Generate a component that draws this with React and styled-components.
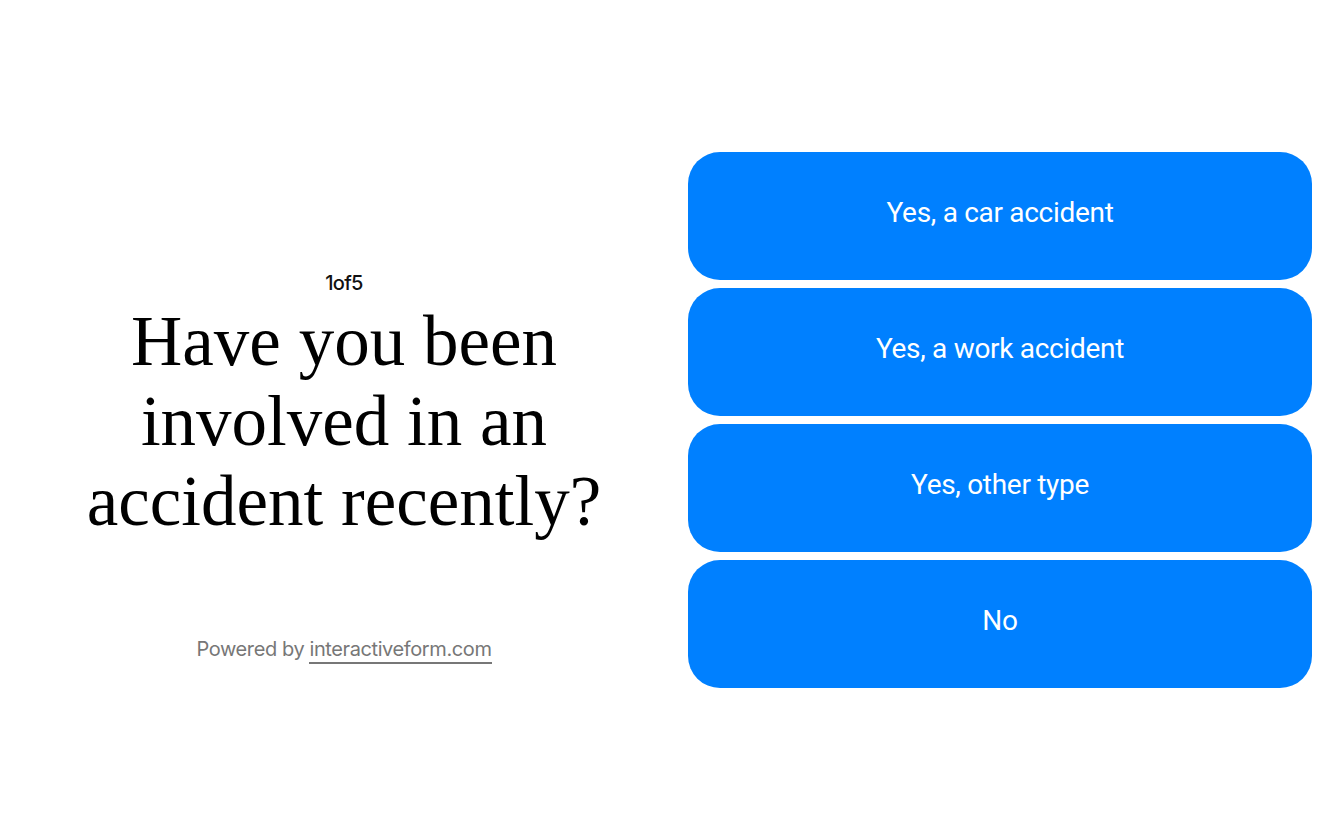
import React from 'react'
import styled, { createGlobalStyle } from 'styled-components'

const GlobalStyle = createGlobalStyle`
  html, body {
    margin: 0;
    padding: 0;
    background: #ffffff;
  }
  body {
    font-family: Inter, "Noto Sans", sans-serif;
  }
`

const Page = styled.main`
  width: 1344px;
  height: 840px;
  box-sizing: border-box;
  padding: 152px 32px;
  display: grid;
  grid-template-columns: 1fr 1fr;
  column-gap: 32px;
`

const QuestionColumn = styled.section`
  display: flex;
  flex-direction: column;
  align-items: center;
  justify-content: center;
  padding-top: 92px;
  text-align: center;
`

const Counter = styled.div`
  font-family: Inter, sans-serif;
  font-size: 20px;
  font-weight: 500;
  letter-spacing: -0.7px;
  color: #111;
  line-height: 22px;
`

const Title = styled.h1`
  margin: 7px 0 0;
  font-family: "Liberation Serif", "Times New Roman", serif;
  font-weight: 400;
  font-size: 71px;
  line-height: 80px;
  color: #000;
`

const Powered = styled.p`
  margin: 96px 0 0;
  font-family: Inter, sans-serif;
  font-size: 20px;
  letter-spacing: -0.4px;
  color: #777;
`

const PoweredLink = styled.a`
  color: #777;
  text-decoration: none;
  border-bottom: 2px solid #777;
  padding-bottom: 1px;
`

const Options = styled.section`
  display: flex;
  flex-direction: column;
  gap: 8px;
`

const OptionButton = styled.button`
  height: 128px;
  border: none;
  border-radius: 32px;
  background: #0080ff;
  color: #fff;
  font-family: Roboto, "Liberation Sans", sans-serif;
  font-size: 28px;
  letter-spacing: -0.3px;
  padding: 0 0 8px;
  cursor: pointer;
`

const options = ['Yes, a car accident', 'Yes, a work accident', 'Yes, other type', 'No']

export default function App() {
  return (
    <>
      <GlobalStyle />
      <Page>
        <QuestionColumn>
          <Counter>1of5</Counter>
          <Title>
            Have you been
            <br />
            involved in an
            <br />
            accident recently?
          </Title>
          <Powered>
            Powered by <PoweredLink href="#">interactiveform.com</PoweredLink>
          </Powered>
        </QuestionColumn>
        <Options>
          {options.map((o) => (
            <OptionButton key={o}>{o}</OptionButton>
          ))}
        </Options>
      </Page>
    </>
  )
}
